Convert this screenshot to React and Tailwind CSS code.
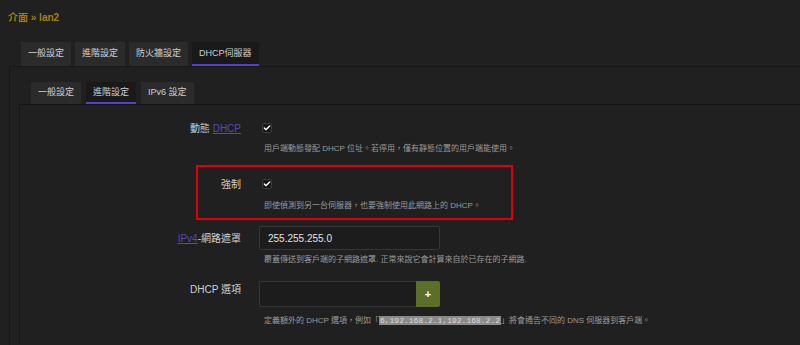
import { Check } from 'lucide-react'

const font = { fontFamily: '"Liberation Sans", "Noto Sans CJK TC", sans-serif' }

function Tab({ label, active, sub }) {
  return (
    <div
      className={`flex items-center border-b-2 px-[7px] text-[9px] leading-none text-[#cfcfcf] ${
        sub ? 'h-[22px]' : 'h-[24px]'
      } ${active ? 'border-[#5b3fc4] bg-[#191919]' : 'border-transparent bg-[#2b2b2b]'}`}
    >
      {label}
    </div>
  )
}

function Checkbox() {
  return (
    <div className="ml-[3px] flex h-[10px] w-[10px] items-center justify-center rounded-[2px] border border-[#3c3c3c] bg-[#171717]">
      <Check className="h-[8px] w-[8px] text-white" strokeWidth={4} />
    </div>
  )
}

function Desc({ children }) {
  return <p className="ml-[5px] h-[12px] text-[8px] leading-[12px] text-[#9a9a9a]">{children}</p>
}

export default function App() {
  return (
    <div className="h-[345px] w-[800px] overflow-hidden bg-[#202020]" style={font}>
      <div className="h-[42px] px-2 pt-[4px]">
        <span className="text-[10px] font-semibold leading-[14px] text-[#a47f0e]">介面 » lan2</span>
      </div>

      <div className="flex h-[24px] gap-1 pl-[21px]">
        <Tab label="一般設定" />
        <Tab label="進階設定" />
        <Tab label="防火牆設定" />
        <Tab label="DHCP伺服器" active />
      </div>

      <div className="ml-[9px] h-[279px] border-l border-t border-[#171717] pl-[9px] pt-[15px]">
        <div className="flex h-[22px] gap-[5px] pl-[12px]">
          <Tab label="一般設定" sub />
          <Tab label="進階設定" sub active />
          <Tab label="IPv6 設定" sub />
        </div>

        <div className="h-[240px] border-l border-t border-[#171717] pt-[13px]">
          {/* 動態 DHCP */}
          <div className="flex h-[20px] items-center">
            <div className="w-[221px] text-right text-[10px] text-[#d0d0d0]">
              動態 <span className="text-[#5548b8] underline">DHCP</span>
            </div>
            <div className="ml-[18px]">
              <Checkbox />
            </div>
          </div>
          <div className="ml-[239px] mt-[5px]">
            <Desc>用戶端動態發配 DHCP 位址。若停用，僅有靜態位置的用戶端能使用。</Desc>
          </div>

          {/* 強制 */}
          <div className="relative mt-[19px]">
            <div className="flex h-[20px] items-center">
              <div className="w-[221px] text-right text-[10px] text-[#d0d0d0]">強制</div>
              <div className="ml-[18px]">
                <Checkbox />
              </div>
            </div>
            <div className="ml-[239px] mt-[6px]">
              <Desc>即使偵測到另一台伺服器，也要強制使用此網路上的 DHCP。</Desc>
            </div>
            <div className="pointer-events-none absolute -top-[9px] -bottom-[8px] left-[176px] w-[317px] border-2 border-[#e0000b]" />
          </div>

          {/* IPv4-網路遮罩 */}
          <div className="mt-[14px] flex h-[24px] items-center">
            <div className="w-[221px] text-right text-[10px] text-[#d0d0d0]">
              <span className="text-[#5548b8] underline">IPv4</span>-網路遮罩
            </div>
            <div className="ml-[18px] flex h-[24px] w-[181px] items-center rounded-[2px] border border-[#363636] bg-[#1c1c1c] px-2 text-[10px] text-[#e2e2e2]">
              255.255.255.0
            </div>
          </div>
          <div className="ml-[239px] mt-[4px]">
            <Desc>覆蓋傳送到客戶端的子網路遮罩. 正常來說它會計算來自於已存在的子網路.</Desc>
          </div>

          {/* DHCP 選項 */}
          <div className="mt-[15px] flex h-[26px] items-start">
            <div className="w-[221px] pt-[3px] text-right text-[10px] leading-[12px] text-[#d0d0d0]">DHCP 選項</div>
            <div className="ml-[18px] flex h-[26px]">
              <div className="h-[26px] w-[157px] rounded-l-[2px] border border-r-0 border-[#363636] bg-[#1c1c1c]" />
              <div className="flex h-[26px] w-[24px] items-center justify-center rounded-r-[2px] bg-[#5b6e2a] text-[11px] font-bold text-white">
                +
              </div>
            </div>
          </div>
          <div className="ml-[239px] mt-[8px]">
            <Desc>
              定義額外的 DHCP 選項，例如「
              <code
                className="bg-[#8a8a8a] px-[1px] text-[8px] text-[#dcdcdc]"
                style={{ fontFamily: '"Liberation Mono", monospace' }}
              >
                6,192.168.2.1,192.168.2.2
              </code>
              」將會通告不同的 DNS 伺服器到客戶端。
            </Desc>
          </div>
        </div>
      </div>
    </div>
  )
}
